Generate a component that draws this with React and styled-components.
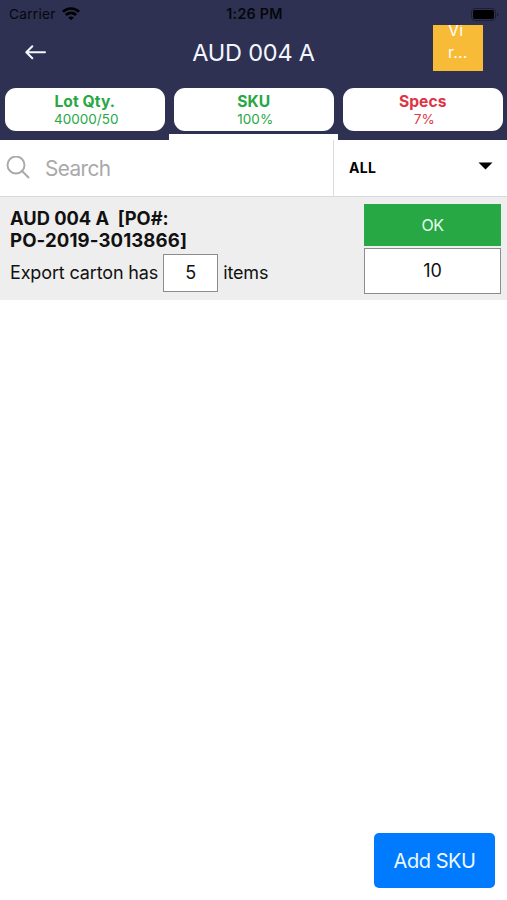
import React from "react";
import styled, { createGlobalStyle } from "styled-components";

const GlobalStyle = createGlobalStyle`
  * { box-sizing: border-box; }
  body { margin: 0; background: #fff; font-family: Inter, "Liberation Sans", sans-serif; }
`;

const Screen = styled.main`
  display: flex;
  flex-direction: column;
  height: 900px;
  overflow: hidden;
  background: #fff;
  color: #111;
`;

const Header = styled.header`
  height: 140px;
  background: #2e3151;
  display: flex;
  flex-direction: column;
`;

const StatusBar = styled.div`
  height: 25px;
  padding: 2px 7px 0 9px;
  display: grid;
  grid-template-columns: 1fr auto 1fr;
  align-items: center;
  font-size: 13.7px;
  line-height: 24px;
  color: #06070c;
`;

const Carrier = styled.div`
  display: flex;
  align-items: center;
  gap: 6px;
  letter-spacing: 0.25px;
`;

const Clock = styled.div`
  font-size: 14.3px;
  font-weight: 600;
  letter-spacing: 0.25px;
`;

const Battery = styled.svg`
  justify-self: end;
`;

const TitleBar = styled.div`
  height: 55px;
  padding: 0 24px;
  display: grid;
  grid-template-columns: 1fr auto 1fr;
  align-items: start;
`;

const BackIcon = styled.svg`
  margin-top: 19px;
`;

const Title = styled.h1`
  margin: 0;
  color: #f4f6ff;
  font-size: 23.5px;
  font-weight: 400;
  line-height: 56px;
  letter-spacing: -0.2px;
`;

const Badge = styled.div`
  justify-self: end;
  width: 50px;
  height: 46px;
  padding-left: 15px;
  overflow: hidden;
  background: #f8bb38;
  color: #fff;
  font-size: 16px;
  line-height: 22px;
`;

const BadgeText = styled.div`
  margin-top: -6px;
  letter-spacing: 0.2px;
`;

const Tabs = styled.nav`
  height: 60px;
  display: grid;
  grid-template-columns: repeat(3, 1fr);
`;

const Tab = styled.div`
  display: flex;
  flex-direction: column;
  justify-content: space-between;
  padding: 8px 4px 0 4.5px;
  border-bottom: 6px solid ${(p) => (p.$active ? "#fff" : "transparent")};
`;

const Pill = styled.div`
  height: 43px;
  border-radius: 11px;
  background: #fff;
  text-align: center;
  color: ${(p) => p.$color};
`;

const PillTitle = styled.div`
  padding-top: 4px;
  font-size: 15.6px;
  line-height: 19px;
  font-weight: 700;
  letter-spacing: 0.1px;
`;

const PillValue = styled.div`
  padding-left: 3px;
  font-size: 13.5px;
  line-height: 16px;
`;

const Filters = styled.div`
  height: 57px;
  display: flex;
  border-bottom: 1px solid #d9d9d9;
`;

const SearchBox = styled.label`
  width: 334px;
  padding-left: 6px;
  display: flex;
  align-items: center;
  gap: 14px;
  border-right: 1px solid #dcdcdc;
  color: #a9a9a9;
  font-size: 20.8px;
  letter-spacing: -0.6px;
`;

const Select = styled.div`
  flex: 1;
  padding: 0 14px 0 15px;
  display: flex;
  align-items: center;
  justify-content: space-between;
  color: #000;
  font-size: 14px;
  font-weight: 700;
  letter-spacing: 0.3px;
`;

const SelectLabel = styled.span`
  margin-top: -1px;
`;

const Item = styled.section`
  height: 103px;
  padding: 7px 6px 6px 10px;
  display: flex;
  justify-content: space-between;
  background: #eee;
`;

const ItemInfo = styled.div`
  width: 300px;
`;

const ItemTitle = styled.div`
  margin-top: 3px;
  font-size: 18.3px;
  line-height: 22px;
  font-weight: 700;
`;

const OrderNumber = styled.div`
  font-size: 18.6px;
  letter-spacing: 0.1px;
`;

const Carton = styled.div`
  display: flex;
  align-items: center;
  height: 38px;
  margin-top: 3px;
  font-size: 18px;
  letter-spacing: -0.14px;
  white-space: nowrap;
`;

const CartonLabel = styled.span`
  margin-top: -1px;
`;

const Field = styled.div`
  display: flex;
  align-items: center;
  justify-content: center;
  background: #fff;
  border: 1px solid #8c8c8c;
  font-size: 18px;
  padding-bottom: 2px;
`;

const CartonField = styled(Field)`
  width: 55px;
  height: 38px;
  margin: 0 5px;
`;

const ItemActions = styled.div`
  width: 137px;
  display: flex;
  flex-direction: column;
  gap: 2px;
`;

const Status = styled.div`
  height: 42px;
  display: flex;
  align-items: center;
  justify-content: center;
  background: #28a745;
  color: #e9fff0;
  font-size: 16px;
  letter-spacing: -0.4px;
`;

const Quantity = styled(Field)`
  height: 46px;
`;

const Footer = styled.footer`
  margin-top: auto;
  padding: 0 12px 12px;
  display: flex;
  justify-content: flex-end;
`;

const AddButton = styled.button`
  width: 121px;
  height: 55px;
  padding: 0;
  border: 0;
  border-radius: 5px;
  background: #007bff;
  color: #eff8ff;
  font: 400 20px Inter, sans-serif;
  letter-spacing: -0.45px;
`;

const tabs = [
  { title: "Lot Qty.", value: "40000/50", color: "#28a745" },
  { title: "SKU", value: "100%", color: "#28a745", active: true },
  { title: "Specs", value: "7%", color: "#dc3545" },
];

export default function App() {
  return (
    <Screen>
      <GlobalStyle />
      <Header>
        <StatusBar>
          <Carrier>
            <span>Carrier</span>
            <svg width="18" height="14" viewBox="0 0 18 14" fill="none" stroke="#000" strokeWidth="2.6">
              <path d="M1 4.8C5.5.4 12.5.4 17 4.8" />
              <path d="M3.9 8C6.8 5.2 11.2 5.2 14.1 8" />
              <path d="M9 13.3 6.2 10.5C7.8 9.1 10.2 9.1 11.8 10.5Z" fill="#000" stroke="none" />
            </svg>
          </Carrier>
          <Clock>1:26 PM</Clock>
          <Battery width="29" height="13" viewBox="0 0 29 13">
            <rect x=".5" y=".5" width="24" height="12" rx="3.5" fill="none" stroke="#1d1f35" />
            <rect x="2" y="2" width="21" height="9" rx="2" fill="#000" />
            <path d="M26 4.5v4c2-.7 2-3.3 0-4Z" fill="#1d1f35" />
          </Battery>
        </StatusBar>
        <TitleBar>
          <BackIcon width="23" height="16" viewBox="0 0 23 16" fill="none" stroke="#f4f6ff" strokeWidth="2" strokeLinecap="round" strokeLinejoin="round">
            <path d="M21 8.3H2.5M8.3 2.3 2.3 8.3l6 6" />
          </BackIcon>
          <Title>AUD 004 A</Title>
          <Badge>
            <BadgeText>Vi<br />r...</BadgeText>
          </Badge>
        </TitleBar>
        <Tabs>
          {tabs.map((t) => (
            <Tab key={t.title} $active={t.active}>
              <Pill $color={t.color}>
                <PillTitle>{t.title}</PillTitle>
                <PillValue>{t.value}</PillValue>
              </Pill>
            </Tab>
          ))}
        </Tabs>
      </Header>
      <Filters>
        <SearchBox>
          <svg width="25" height="25" viewBox="0 0 25 25" fill="none" stroke="#a9a9a9" strokeWidth="1.9" strokeLinecap="round">
            <circle cx="10" cy="9" r="8.5" />
            <path d="m16 15 6.5 6.500" />
          </svg>
          <span>Search</span>
        </SearchBox>
        <Select>
          <SelectLabel>ALL</SelectLabel>
          <svg width="15" height="12" viewBox="0 0 15 12">
            <path d="M.5.5h14l-7 7Z" fill="#000" />
          </svg>
        </Select>
      </Filters>
      <Item>
        <ItemInfo>
          <ItemTitle>
            {"AUD 004 A \u00a0[PO#:"}
            <OrderNumber>PO-2019-3013866]</OrderNumber>
          </ItemTitle>
          <Carton>
            <CartonLabel>Export carton has</CartonLabel>
            <CartonField>5</CartonField>
            <CartonLabel>items</CartonLabel>
          </Carton>
        </ItemInfo>
        <ItemActions>
          <Status>OK</Status>
          <Quantity>10</Quantity>
        </ItemActions>
      </Item>
      <Footer>
        <AddButton>Add SKU</AddButton>
      </Footer>
    </Screen>
  );
}
